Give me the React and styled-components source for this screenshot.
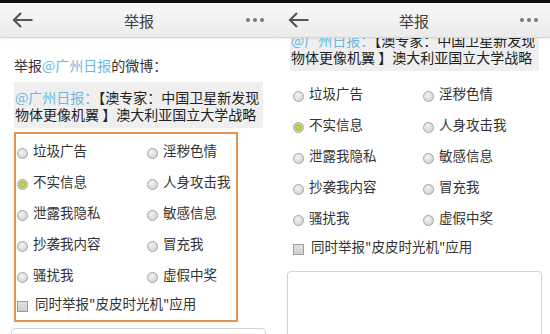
import React from 'react';
import styled, { createGlobalStyle } from 'styled-components';

const GlobalStyle = createGlobalStyle`
  html, body {
    margin: 0;
    padding: 0;
    background: #fff;
  }
  body {
    font-family: "Noto Sans CJK SC", "Noto Sans", sans-serif;
  }
`;

const Page = styled.div`
  display: flex;
  width: 550px;
  height: 334px;
  overflow: hidden;
  background: #fff;
`;

const Screen = styled.div`
  width: ${({ $width }) => $width}px;
  flex-shrink: 0;
  height: 334px;
  display: flex;
  flex-direction: column;
  overflow: hidden;
  border-top: 3px solid #111;
  box-sizing: border-box;
`;

const Header = styled.div`
  height: 35px;
  flex-shrink: 0;
  box-sizing: border-box;
  display: flex;
  align-items: center;
  padding: 0 11px 0 12px;
  background: linear-gradient(#f8f8f8, #ebebeb);
  border-bottom: 1px solid #d6d6d6;
  box-shadow: 0 1px 2px rgba(0, 0, 0, 0.06);
  position: relative;
  z-index: 1;
`;

const Title = styled.div`
  flex: 1;
  text-align: center;
  font-size: 15px;
  color: #3d3d3d;
`;

const Body = styled.div`
  flex: 1;
  overflow: hidden;
`;

const Content = styled.div`
  margin-top: ${({ $scroll }) => -$scroll}px;
  padding: 17px 0 0 14px;
`;

const Intro = styled.div`
  font-size: 14px;
  line-height: 20px;
  color: #333;
`;

const At = styled.span`
  color: #6cb9dc;
`;

const Quote = styled.div`
  margin-top: 7px;
  width: 249px;
  box-sizing: border-box;
  padding: 7px 0 5px 1px;
  background: #efefef;
  font-size: 14px;
  line-height: 17px;
  color: #222;
  white-space: nowrap;
`;

const Options = styled.div`
  margin-top: 4px;
  width: 224px;
  box-sizing: border-box;
  border: 2px solid ${({ $highlight }) => ($highlight ? '#e5934a' : 'transparent')};
  display: grid;
  grid-template-columns: 130px 1fr;
  grid-auto-rows: 31px;
`;

const Option = styled.label`
  display: flex;
  align-items: center;
  gap: 5px;
  font-size: 13.5px;
  color: #333;
`;

const Radio = styled.span`
  width: 11px;
  height: 11px;
  margin: 7px 0 0 1px;
  box-sizing: border-box;
  border-radius: 50%;
  border: 1px solid #a3a3a3;
  background: ${({ $checked }) =>
    $checked
      ? 'radial-gradient(circle, #c8e24f 0, #a4c533 3px, #d4d4d4 3.8px, #c6c6c6 100%)'
      : 'radial-gradient(circle at 40% 35%, #f3f3f3, #cdcdcd)'};
`;

const CheckRow = styled.label`
  grid-column: 1 / -1;
  height: 27px;
  display: flex;
  align-items: center;
  gap: 7px;
  font-size: 13.5px;
  color: #333;
`;

const Checkbox = styled.span`
  width: 11px;
  height: 11px;
  margin: 8px 0 0 1px;
  box-sizing: border-box;
  border: 1px solid #9c9c9c;
  background: linear-gradient(#e2e2e2, #cfcfcf);
`;

const TextBox = styled.div`
  margin: 6px 0 0 -3px;
  width: 255px;
  height: 90px;
  box-sizing: border-box;
  border: 1px solid #d2d2d2;
  border-radius: 4px;
  background: #fff;
`;

const reasons = [
  '垃圾广告', '淫秽色情',
  '不实信息', '人身攻击我',
  '泄露我隐私', '敏感信息',
  '抄袭我内容', '冒充我',
  '骚扰我', '虚假中奖',
];

const BackIcon = () => (
  <svg width="21" height="16" viewBox="0 0 21 16">
    <path d="M20.5 8H2M9 1L2 8l7 7" fill="none" stroke="#555" strokeWidth="2.2" />
  </svg>
);

const MoreIcon = () => (
  <svg width="20" height="6" viewBox="0 0 20 6">
    <circle cx="3" cy="3" r="2" fill="#777" />
    <circle cx="10" cy="3" r="2" fill="#777" />
    <circle cx="17" cy="3" r="2" fill="#777" />
  </svg>
);

const ReportScreen = ({ width, scroll, highlight }) => (
  <Screen $width={width}>
    <Header>
      <BackIcon />
      <Title>举报</Title>
      <MoreIcon />
    </Header>
    <Body>
      <Content $scroll={scroll}>
        <Intro>
          举报<At>@广州日报</At>的微博：
        </Intro>
        <Quote>
          <At>@广州日报：</At>【澳专家：中国卫星新发现
          <br />
          物体更像机翼 】澳大利亚国立大学战略
        </Quote>
        <Options $highlight={highlight}>
          {reasons.map((r) => (
            <Option key={r}>
              <Radio $checked={r === '不实信息'} />
              {r}
            </Option>
          ))}
          <CheckRow>
            <Checkbox />
            同时举报"皮皮时光机"应用
          </CheckRow>
        </Options>
        <TextBox />
      </Content>
    </Body>
  </Screen>
);

const App = () => (
  <>
    <GlobalStyle />
    <Page>
      <ReportScreen width={276} scroll={0} highlight />
      <ReportScreen width={274} scroll={57} />
    </Page>
  </>
);

export default App;
